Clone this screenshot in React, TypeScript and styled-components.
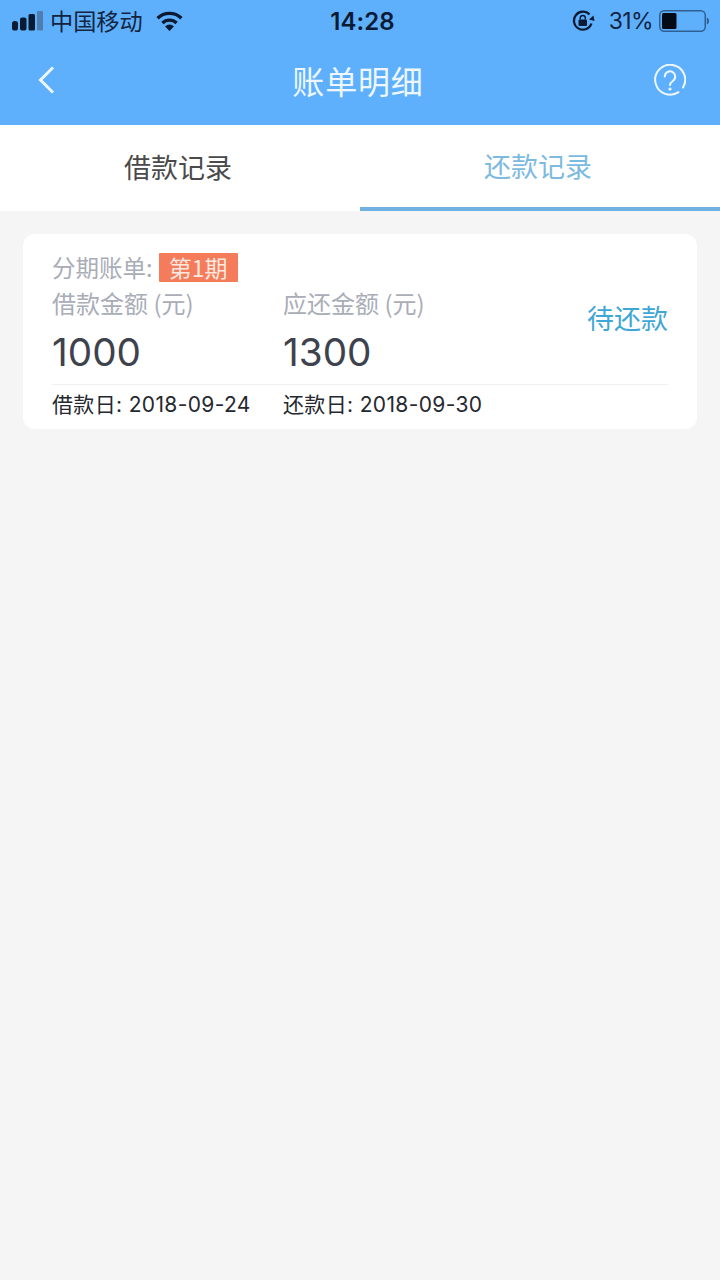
import React from "react";
import styled, { createGlobalStyle } from "styled-components";

const Global = createGlobalStyle`
  html, body { margin: 0; padding: 0; background: #f5f5f5; }
  body { font-family: "Inter", "Noto Sans CJK SC", sans-serif; }
  * { box-sizing: border-box; }
`;
const cjk = `"Noto Sans CJK SC", sans-serif`;
const Page = styled.div`
  width: 720px; height: 1280px; background: #f5f5f5; display: flex; flex-direction: column;
  overflow: hidden;
`;
const Header = styled.header`
  height: 125px; background: #5eb0fc; display: flex; flex-direction: column;
`;
const StatusBar = styled.div`
  height: 40px; display: grid; grid-template-columns: 1fr auto 1fr; align-items: center;
  color: #0b1a33; padding: 0 11px 0 12px;
`;
const StatusLeft = styled.div`
  display: flex; align-items: center; gap: 8px;
`;
const Carrier = styled.span`
  font: 400 23.2px/40px ${cjk}; margin: -2px 5px 0 -1px; color: #13243f;
`;
const Clock = styled.span`
  font: 600 24px/40px "Inter", sans-serif; letter-spacing: 0.1px; margin: 2px 0 0 4px;
`;
const StatusRight = styled.div`
  display: flex; align-items: center; justify-content: flex-end;
`;
const Percent = styled.span`
  font: 400 23px/40px "Inter", sans-serif; margin: 0 6px 0 13px; letter-spacing: -0.6px; color: #13243f;
`;
const NavBar = styled.div`
  flex: 1; display: flex; align-items: center; justify-content: space-between;
  padding: 0 34px 5px 37px;
`;
const Title = styled.h1`
  margin: 0 0 0 7px; font: 400 32px/44px ${cjk}; color: #eef7ff; letter-spacing: 0.85px;
`;
const Tabs = styled.nav`
  height: 86px; background: #fff; display: grid; grid-template-columns: 1fr 1fr;
`;
const Tab = styled.div<{ $active?: boolean }>`
  display: flex; align-items: center; justify-content: center;
  font: 400 27px/40px ${cjk};
  color: ${(p) => (p.$active ? "#7dbadf" : "#4a4a4a")};
  border-bottom: 4px solid ${(p) => (p.$active ? "#6fb2e2" : "transparent")};
  padding: ${(p) => (p.$active ? "0 4px 0 0" : "2px 4px 0 0")};
`;
const Content = styled.main`
  padding: 23px 23px;
`;
const Card = styled.section`
  height: 195px; background: #fff; border-radius: 12px; padding: 18px 29px 0 29px;
`;
const PeriodRow = styled.div`
  display: flex; align-items: center; height: 30px; gap: 6px;
`;
const PeriodLabel = styled.span`
  font: 400 23.5px/30px ${cjk}; color: #a9adb7;
`;
const Badge = styled.span`
  height: 29px; width: 79px; background: #f47c5b; color: #fde8e0; border-radius: 1px;
  font: 400 23px/29px ${cjk}; text-align: center;
`;
const Columns = styled.div`
  display: grid; grid-template-columns: 231px 1fr auto; height: 103px; align-items: start;
  border-bottom: 1px solid #f0f0f0;
`;
const Column = styled.div`
  display: flex; flex-direction: column; padding-top: 8px;
`;
const AmountLabel = styled.span`
  font: 400 24px/30px ${cjk}; color: #a9adb7; margin-top: -2px;
`;
const Amount = styled.div`
  font: 400 38.7px/46px "Inter", sans-serif; color: #3e424d; margin-top: 11px; letter-spacing: 0;
`;
const State = styled.span`
  font: 400 27px/38px ${cjk}; color: #3fa7d6; margin-top: 17px;
`;
const Dates = styled.div`
  display: grid; grid-template-columns: 231px 1fr; height: 40px; align-items: center;
`;
const DateText = styled.span`
  font: 400 21px/40px "Inter", "Noto Sans CJK SC", sans-serif; color: #25282f; letter-spacing: 0.35px;
`;

const Signal = () => (
  <svg width="31" height="20" viewBox="0 0 31 20">
    <rect x="0" y="10" width="6" height="9.5" rx="2.6" fill="#0b1a33" />
    <rect x="8" y="6.5" width="6.5" height="13" rx="2" fill="#0b1a33" />
    <rect x="16.5" y="3" width="6.5" height="16.5" rx="1.5" fill="#0b1a33" />
    <rect x="25" y="0" width="6" height="19.5" rx="1" fill="#4e7eb0" />
  </svg>
);
const Wifi = () => (
  <svg width="27" height="20" viewBox="0 0 27 20" fill="none" stroke="#0b1a33" strokeWidth="3.4">
    <path d="M1.6 7.2a17 17 0 0 1 23.8 0" />
    <path d="M6.4 12a10.2 10.2 0 0 1 14.2 0" />
    <path d="M13.5 20l-4.4-4.6a6.2 6.2 0 0 1 8.8 0z" fill="#0b1a33" stroke="none" />
  </svg>
);
const RotationLock = () => (
  <svg width="24" height="22" viewBox="0 0 24 22" fill="none">
    <path d="M19.5 13.5A9 9 0 1 1 17.5 4.5" stroke="#0b1a33" strokeWidth="2.2" />
    <path d="M17 9.5l5.5 1.5-1-5.5z" fill="#0b1a33" />
    <rect x="6.5" y="9.5" width="8.5" height="6.5" rx="1" fill="#0b1a33" />
    <path d="M8.3 9.5V8a2.5 2.5 0 0 1 5 0v1.5" stroke="#0b1a33" strokeWidth="1.5" />
  </svg>
);
const Battery = () => (
  <svg width="50" height="22" viewBox="0 0 50 22">
    <rect x="0.75" y="0.75" width="45.5" height="20.5" rx="4.5" fill="none" stroke="#2f5f92" strokeWidth="1.5" />
    <rect x="3" y="3" width="14.5" height="16" rx="1.5" fill="#050b16" />
    <path d="M47.8 7.5c1.5.4 2.2 1.8 2.2 3.5s-.7 3.1-2.2 3.5z" fill="#2f5f92" />
  </svg>
);
const Back = () => (
  <svg width="18" height="30" viewBox="0 0 18 30" fill="none">
    <path d="M16 2.5L3.5 15 16 27.5" stroke="#eef7ff" strokeWidth="3" />
  </svg>
);
const Help = () => (
  <svg width="32" height="32" viewBox="0 0 32 32" fill="none" stroke="#eef7ff" strokeWidth="2" strokeLinecap="round">
    <path d="M24.5 28.2A15 15 0 1 1 29 23.5" />
    <path d="M10.8 12.5a5.2 5.2 0 1 1 8.3 4.2c-1.9 1.4-3.1 2.3-3.1 4.3" />
    <circle cx="16" cy="25" r="0.6" fill="#eef7ff" />
  </svg>
);

export default function App() {
  return (
    <Page>
      <Global />
      <Header>
        <StatusBar>
          <StatusLeft>
            <Signal />
            <Carrier>中国移动</Carrier>
            <Wifi />
          </StatusLeft>
          <Clock>14:28</Clock>
          <StatusRight>
            <RotationLock />
            <Percent>31%</Percent>
            <Battery />
          </StatusRight>
        </StatusBar>
        <NavBar>
          <Back />
          <Title>账单明细</Title>
          <Help />
        </NavBar>
      </Header>
      <Tabs>
        <Tab>借款记录</Tab>
        <Tab $active>还款记录</Tab>
      </Tabs>
      <Content>
        <Card>
          <PeriodRow>
            <PeriodLabel>分期账单:</PeriodLabel>
            <Badge>第1期</Badge>
          </PeriodRow>
          <Columns>
            <Column>
              <AmountLabel>借款金额 (元)</AmountLabel>
              <Amount>1000</Amount>
            </Column>
            <Column>
              <AmountLabel>应还金额 (元)</AmountLabel>
              <Amount>1300</Amount>
            </Column>
            <State>待还款</State>
          </Columns>
          <Dates>
            <DateText>借款日: 2018-09-24</DateText>
            <DateText>还款日: 2018-09-30</DateText>
          </Dates>
        </Card>
      </Content>
    </Page>
  );
}
